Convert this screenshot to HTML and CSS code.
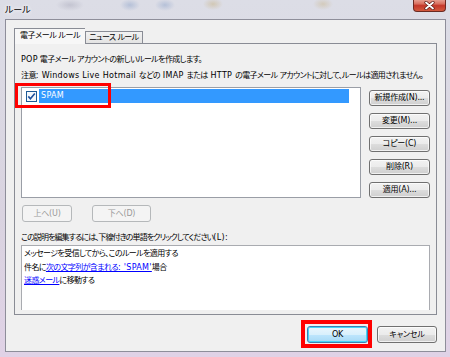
FILE: index.html
```html
<!DOCTYPE html>
<html lang="ja">
<head>
  <meta charset="UTF-8">
  <title>ルール</title>
  <link rel="stylesheet" href="styles.css">
</head>
<body>
  <div class="window">
    <div class="titlebar">
      <span class="title">ルール</span>
      <span class="close">
        <svg width="11" height="9" viewBox="0 0 11 9">
          <path d="M2 1.5 L9 7.5 M9 1.5 L2 7.5" stroke="#5a1a14" stroke-width="3.2" stroke-linecap="round"/>
          <path d="M2 1.5 L9 7.5 M9 1.5 L2 7.5" stroke="#ffffff" stroke-width="1.8" stroke-linecap="round"/>
        </svg>
      </span>
    </div>

    <div class="client">
      <div class="tabs">
        <div class="tab active">電子メール ルール</div>
        <div class="tab">ニュース ルール</div>
      </div>

      <div class="pane">
        <p class="line"><span class="en">POP</span> 電子メール アカウントの新しいルールを作成します。</p>
        <p class="line note">注意<span class="en">: Windows Live Hotmail </span>などの<span class="en"> IMAP </span>または<span class="en"> HTTP </span>の電子メール アカウントに対して、ルールは適用されません。</p>

        <div class="rules-row">
          <div class="listbox">
            <div class="rule">
              <svg class="check" width="11" height="11" viewBox="0 0 11 11">
                <rect x="0.5" y="0.5" width="10" height="10" fill="#f4f8fc" stroke="#1d5a96"/>
                <path d="M2.3 5.4 L4.4 7.8 L8.8 2.6" fill="none" stroke="#1c4f9c" stroke-width="1.6"/>
              </svg>
              <span class="name en">SPAM</span>
            </div>
            <div class="mark"></div>
          </div>

          <div class="side-buttons">
            <button class="btn">新規作成(N)...</button>
            <button class="btn">変更(M)...</button>
            <button class="btn">コピー(C)</button>
            <button class="btn">削除(R)</button>
            <button class="btn">適用(A)...</button>
          </div>
        </div>

        <div class="move-buttons">
          <button class="btn up" disabled>上へ(U)</button>
          <button class="btn down" disabled>下へ(D)</button>
        </div>

        <p class="line label">この説明を編集するには、下線付きの単語をクリックしてください<span class="en">(L):</span></p>

        <div class="desc">
          <div>メッセージを受信してから、このルールを適用する</div>
          <div>件名に<a href="#">次の文字列が含まれる<span class="en">: 'SPAM'</span></a>場合</div>
          <div><a href="#">迷惑メール</a>に移動する</div>
        </div>
      </div>

      <div class="footer">
        <button class="btn default">OK</button>
        <button class="btn">キャンセル</button>
      </div>
    </div>
  </div>
</body>
</html>
```

FILE: styles.css
```css
* {
  box-sizing: border-box;
}

body {
  margin: 0;
  font-family: "DejaVu Sans", "Noto Sans CJK JP", sans-serif;
  font-size: 8px;
  font-feature-settings: "palt";
  letter-spacing: -0.6px;
  color: #000;
}

/* latin runs are set wider than the japanese ones */
.en {
  letter-spacing: 0.3px;
}

.window {
  width: 450px;
  height: 357px;
  display: flex;
  flex-direction: column;
  padding: 0 4px 5px 5px;
  background: linear-gradient(to bottom, #dcdde6, #d9d3e0 60%, #e0d2e6);
}

/* title bar */
.titlebar {
  height: 19px;
  display: flex;
  justify-content: space-between;
  align-items: flex-start;
  background:
    radial-gradient(ellipse 14px 6px at 65px 5px, rgba(150, 150, 170, 0.35), transparent),
    radial-gradient(ellipse 10px 6px at 125px 5px, rgba(110, 140, 190, 0.35), transparent),
    radial-gradient(ellipse 10px 6px at 160px 5px, rgba(110, 140, 190, 0.35), transparent),
    radial-gradient(ellipse 10px 6px at 208px 4px, rgba(190, 160, 90, 0.35), transparent),
    radial-gradient(ellipse 10px 6px at 318px 4px, rgba(190, 160, 90, 0.3), transparent);
}

.title {
  padding-top: 4px;
  font-size: 9px;
  line-height: 12px;
  letter-spacing: 0;
  text-shadow: 0 0 4px #fff, 0 0 4px #fff;
}

.close {
  width: 33px;
  height: 13px;
  margin-top: -1px;
  display: flex;
  justify-content: center;
  align-items: center;
  border: 1px solid #6b2a22;
  border-top: none;
  border-radius: 0 0 4px 4px;
  background: linear-gradient(to bottom, #e9a99b 0%, #d9705f 40%, #c4382a 55%, #d35a3e 100%);
}

/* client area */
.client {
  flex: 1;
  display: flex;
  flex-direction: column;
  padding: 8px 8px 0 8px;
  background: #f0f0f0;
  border: 1px solid #8e8e9a;
}

.tabs {
  height: 15px;
  display: flex;
  align-items: flex-end;
  position: relative;
  z-index: 1;
}

.tab {
  height: 12px;
  padding: 0 3px;
  line-height: 11px;
  letter-spacing: -0.6px;
  border: 1px solid #898c95;
  border-bottom: none;
  background: linear-gradient(to bottom, #f2f2f2, #e3e3e3);
}

.tab.active {
  height: 16px;
  margin-bottom: -1px;
  padding: 0 5px;
  line-height: 14px;
  letter-spacing: -0.4px;
  background: #f7f7f7;
  border-right: none;
}

.pane {
  height: 272px;
  padding: 10px 6px 0 6px;
  border: 1px solid #898c95;
  background: #f0f0f0;
}

.line {
  margin: 0;
  height: 12px;
  line-height: 12px;
  white-space: nowrap;
}

.note {
  margin-top: 4px;
}

/* rules list */
.rules-row {
  margin-top: 5px;
  display: flex;
  gap: 8px;
}

.listbox {
  position: relative;
  width: 341px;
  height: 111px;
  padding: 1px 0;
  background: #fff;
  border: 1px solid #9a9ea6;
}

.rule {
  height: 14px;
  display: flex;
  align-items: center;
  padding-left: 4px;
}

.check {
  flex: none;
}

.name {
  width: 310px;
  height: 14px;
  margin-left: 2px;
  padding-left: 2px;
  line-height: 14px;
  color: #fff;
  background: #3399ff;
}

.mark {
  position: absolute;
  left: -7px;
  top: -5px;
  width: 96px;
  height: 25px;
  border: 3px solid #ff0000;
}

.side-buttons {
  padding-top: 3px;
  display: flex;
  flex-direction: column;
  gap: 7px;
}

.side-buttons .btn {
  width: 61px;
  height: 16px;
}

/* buttons */
.btn {
  margin: 0;
  padding: 0;
  font: inherit;
  font-feature-settings: "palt";
  letter-spacing: -0.2px;
  line-height: 14px;
  color: #000;
  white-space: nowrap;
  border: 1px solid #707070;
  border-radius: 3px;
  background: linear-gradient(to bottom, #f2f2f2 0%, #ebebeb 50%, #dddddd 51%, #cfcfcf 100%);
  box-shadow: inset 0 0 0 1px rgba(255, 255, 255, 0.7);
}

.btn:disabled {
  color: #9a9a9a;
  border-color: #b5b8ba;
  background: #f4f4f4;
  box-shadow: none;
}

.move-buttons {
  margin-top: 7px;
  display: flex;
}

.move-buttons .btn {
  height: 17px;
}

.up {
  width: 50px;
  margin-left: 1px;
}

.down {
  width: 59px;
  margin-left: 20px;
}

.label {
  margin-top: 10px;
  letter-spacing: -0.9px;
}

/* description */
.desc {
  width: 409px;
  height: 65px;
  margin-top: 1px;
  padding: 1px 2px;
  line-height: 13.5px;
  background: #fff;
  border: 1px solid #a9abb0;
  border-bottom: none;
}

.desc a {
  color: #0000ff;
  text-decoration: underline;
}

/* footer */
.footer {
  margin-top: 11px;
  display: flex;
  justify-content: flex-end;
  gap: 9px;
}

.footer .btn {
  width: 60px;
  height: 17px;
}

.footer .default {
  position: relative;
  width: 61px;
  border-color: #3c7fb1;
  background: linear-gradient(to bottom, #eaf6fd 0%, #d9f0fc 50%, #bee6fd 51%, #a7d9f5 100%);
  box-shadow: inset 0 0 0 1px #48d3f6;
}

.footer .default::after {
  content: "";
  position: absolute;
  top: -7px;
  right: -5px;
  bottom: -6px;
  left: -7px;
  border: 4px solid #ff0000;
}
```
